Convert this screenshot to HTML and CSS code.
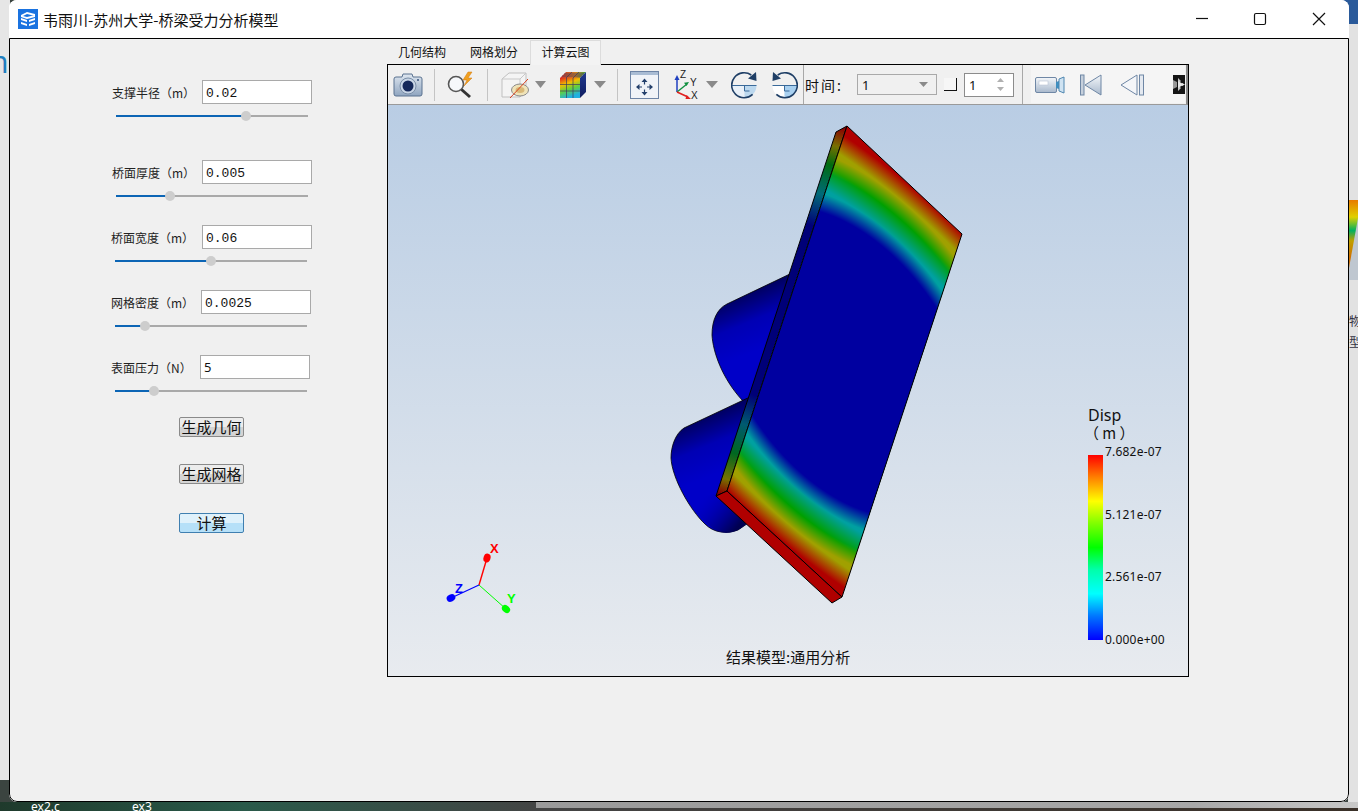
FILE: index.html
```html
<!DOCTYPE html>
<html lang="zh">
<head>
<meta charset="utf-8">
<title>桥梁受力分析模型</title>
<link rel="stylesheet" href="styles.css">
</head>
<body>
<div class="desktop">
  <div class="bg-left"><span class="bg-left-glyph">n</span></div>
  <div class="bg-top-right"></div>
  <div class="bg-right">
    <svg class="bg-right-plot" width="9" height="80" viewBox="0 0 9 80"><defs><linearGradient id="bgp" x1="0" y1="0" x2="0" y2="1"><stop offset="0" stop-color="#e87a00"/><stop offset=".25" stop-color="#e0d000"/><stop offset=".45" stop-color="#00b060"/><stop offset=".6" stop-color="#c0a000"/><stop offset=".85" stop-color="#d07000"/></linearGradient></defs><rect width="9" height="80" fill="#bfc7d0"/><path d="M0 0H9V18L0 68Z" fill="url(#bgp)"/></svg>
    <span class="bg-right-text">物<br>型</span>
  </div>
  <div class="bg-bottom"><span class="bg-file f1">ex2.c</span><span class="bg-file f2">ex3</span><span class="bg-bar"></span></div>

  <div class="window">
    <header class="titlebar">
      <svg class="app-icon" width="20" height="20" viewBox="0 0 20 20"><rect width="20" height="20" fill="#1a73e0"/><path d="M3 6l6-3 8 2v2l-8-2-4 2 4 1 8-2v2l-8 2-6-2zM3 9l6 2v2L3 11zM3 13l6 2v2l-6-2zM11 11l6-2v2l-6 2zM11 15l6-2v2l-6 2z" fill="#fff"/></svg>
      <span class="title">韦雨川-苏州大学-桥梁受力分析模型</span>
      <div class="win-controls">
        <svg class="win-btn" width="46" height="38" viewBox="0 0 46 38"><path d="M16 18.500H28" stroke="#111" stroke-width="1.200"/></svg>
        <svg class="win-btn" width="46" height="38" viewBox="0 0 46 38"><rect x="16.500" y="13.500" width="11" height="11" rx="1.500" fill="none" stroke="#111" stroke-width="1.200"/></svg>
        <svg class="win-btn" width="46" height="38" viewBox="0 0 46 38"><path d="M17 13l12 12M29 13L17 25" stroke="#111" stroke-width="1.200"/></svg>
      </div>
    </header>

    <main class="content">
      <aside class="params">
        <div class="param p1">
          <div class="param-row"><label class="param-label">支撑半径（m）</label><div class="param-input mono">0.02</div></div>
          <div class="slider"><div class="slider-fill" style="width:67.7%"></div><div class="slider-rest"></div><div class="slider-thumb" style="left:67.7%"></div></div>
        </div>
        <div class="param p2">
          <div class="param-row"><label class="param-label">桥面厚度（m）</label><div class="param-input mono">0.005</div></div>
          <div class="slider"><div class="slider-fill" style="width:28%"></div><div class="slider-rest"></div><div class="slider-thumb" style="left:28%"></div></div>
        </div>
        <div class="param p3">
          <div class="param-row"><label class="param-label">桥面宽度（m）</label><div class="param-input mono">0.06</div></div>
          <div class="slider"><div class="slider-fill" style="width:50%"></div><div class="slider-rest"></div><div class="slider-thumb" style="left:50%"></div></div>
        </div>
        <div class="param p4">
          <div class="param-row"><label class="param-label">网格密度（m）</label><div class="param-input mono">0.0025</div></div>
          <div class="slider"><div class="slider-fill" style="width:15.6%"></div><div class="slider-rest"></div><div class="slider-thumb" style="left:15.6%"></div></div>
        </div>
        <div class="param p5">
          <div class="param-row"><label class="param-label">表面压力（N）</label><div class="param-input">5</div></div>
          <div class="slider"><div class="slider-fill" style="width:20.300%"></div><div class="slider-rest"></div><div class="slider-thumb" style="left:20.300%"></div></div>
        </div>
        <button class="action b1">生成几何</button>
        <button class="action b2">生成网格</button>
        <button class="action primary b3">计算</button>
      </aside>

      <section class="workspace">
        <nav class="tabs">
          <span class="tab">几何结构</span>
          <span class="tab">网格划分</span>
          <span class="tab active">计算云图</span>
        </nav>
        <div class="viewer">
          <div class="toolbar">
            <svg class="tb i-camera" width="30" height="26" viewBox="0 0 30 26"><defs><linearGradient id="camg" x1="0" y1="0" x2="0" y2="1"><stop offset="0" stop-color="#dfe7f0"/><stop offset="1" stop-color="#8fa5c0"/></linearGradient></defs><path d="M3 5h6l1-3h9l1 3h7a2 2 0 0 1 2 2v15a2 2 0 0 1-2 2H3a2 2 0 0 1-2-2V7a2 2 0 0 1 2-2z" fill="url(#camg)" stroke="#5a7290"/><circle cx="15" cy="14" r="8" fill="#c9d6e6" stroke="#7b8fa8"/><circle cx="15" cy="14" r="5.500" fill="#14285a"/><circle cx="25" cy="8" r="1" fill="#35507a"/></svg>
            <span class="tb-sep s1"></span>
            <svg class="tb i-mag" width="30" height="28" viewBox="0 0 30 28"><circle cx="10" cy="13" r="7.500" fill="#f6f8fb" stroke="#555" stroke-width="1.600"/><path d="M15.500 18.500L24 26" stroke="#333" stroke-width="3"/><path d="M22 1l-5 8h4l-3 6 8-8h-4l4-6z" fill="#f0a020" stroke="#d07810" stroke-width=".5"/></svg>
            <span class="tb-sep s2"></span>
            <svg class="tb i-cube" width="30" height="28" viewBox="0 0 30 28"><path d="M2 8l7-6h17v17l-6 7H2z" fill="#f4f4f4" stroke="#c0c0c0"/><path d="M2 8h18v18M20 8l6-6" fill="none" stroke="#c8c8c8"/><ellipse cx="20" cy="19" rx="8.500" ry="6" fill="#efe3b8" stroke="#8a8a8a"/><ellipse cx="20" cy="19" rx="4.500" ry="3" fill="#d8b878"/><path d="M10 27L28 8" stroke="#d84020" stroke-width="1"/></svg>
            <svg class="tb i-drop d1" width="11" height="7" viewBox="0 0 11 7"><path d="M0 0h11L5.500 7z" fill="#8a8a8a"/></svg>
            <svg class="tb i-colorcube" width="28" height="28" viewBox="0 0 28 28"><defs><linearGradient id="ccg" x1="0" y1="0" x2=".35" y2="1"><stop offset="0" stop-color="#e02020"/><stop offset=".35" stop-color="#f0c000"/><stop offset=".65" stop-color="#60d040"/><stop offset="1" stop-color="#20b0e0"/></linearGradient><linearGradient id="cct" x1="0" y1="0" x2="1" y2="0"><stop offset="0" stop-color="#d03030"/><stop offset=".6" stop-color="#d08020"/><stop offset="1" stop-color="#40a040"/></linearGradient><linearGradient id="ccs" x1="0" y1="0" x2="0" y2="1"><stop offset="0" stop-color="#203a90"/><stop offset="1" stop-color="#101d60"/></linearGradient></defs><path d="M1 7l6-6h20L21 7z" fill="url(#cct)"/><path d="M21 7l6-6v20l-6 6z" fill="url(#ccs)"/><rect x="1" y="7" width="20" height="20" fill="url(#ccg)"/><path d="M7.500 7v20M14 7v20M1 13.500h20M1 20h20M7 7l6-6M14 7l6-6M5 3h20M3 5h20" stroke="#3b3b60" stroke-width=".7" fill="none"/></svg>
            <svg class="tb i-drop d2" width="12" height="7" viewBox="0 0 12 7"><path d="M0 0h12L6 7z" fill="#8a8a8a"/></svg>
            <span class="tb-sep s3"></span>
            <svg class="tb i-move" width="29" height="28" viewBox="0 0 29 28"><rect x=".5" y=".5" width="28" height="27" fill="#f0f3f8" stroke="#6d84a6"/><rect x="1" y="1" width="27" height="3" fill="#a9bcd4"/><path d="M14.500 7.500l3 3.500h-2.400v2.500h-1.200V11h-2.400zM14.500 24.500l3-3.500h-2.400v-2.500h-1.200V21h-2.400zM6 16l3.500-3v2.400H12v1.200H9.500V19zM23 16l-3.500-3v2.400H17v1.200h2.500V19z" fill="#24406c"/></svg>
            <svg class="tb i-axes" width="28" height="32" viewBox="0 0 28 32"><path d="M3 23V10" stroke="#2040c0" stroke-width="1.500"/><path d="M3 6L0.500 11h5z" fill="#2040c0"/><path d="M3 23l10-8" stroke="#109040" stroke-width="1.500"/><path d="M15 13l-5 .8 2.500 3.200z" fill="#109040"/><path d="M3 23l11 5" stroke="#e02020" stroke-width="1.500"/><path d="M17 30l-4.500-4-1 4z" fill="#e02020"/><text class="axis-txt" x="6" y="9">Z</text><text class="axis-txt" x="16" y="17">Y</text><text class="axis-txt" x="17" y="30">X</text></svg>
            <svg class="tb i-drop d3" width="12" height="7" viewBox="0 0 12 7"><path d="M0 0h12L6 7z" fill="#8a8a8a"/></svg>
            <svg class="tb i-rot r1" width="27" height="28" viewBox="0 0 27 28"><path d="M13.500 14.500V27a12.500 12.500 0 0 1-12.500-12.500z" fill="#e8f0f8"/><path d="M13.500 14.500V27a12.500 12.500 0 0 0 12-12.500z" fill="#bcd8ee"/><path d="M1 14.500h24.500M13.500 14.500V20h5" fill="none" stroke="#3a6a9a" stroke-width="1"/><path d="M21 24A12.500 12.500 0 1 1 21 4.500" fill="none" stroke="#1f3f66" stroke-width="1.600" transform="rotate(-4 13.500 14.500)"/><path d="M25 1l.5 9-8.500-2.500z" fill="#1f3f66"/></svg>
            <svg class="tb i-rot r2" width="27" height="28" viewBox="0 0 27 28"><path d="M13.500 14.500V27a12.500 12.500 0 0 1-12-12.500z" fill="#fff"/><path d="M13.500 14.500V27a12.500 12.500 0 0 0 12.500-12.500z" fill="#a8d0f0"/><path d="M1.500 14.500H26M13.500 14.500V20h5" fill="none" stroke="#3a6a9a" stroke-width="1"/><path d="M6 24A12.500 12.500 0 1 0 6 4.500" fill="none" stroke="#1f3f66" stroke-width="1.600" transform="rotate(4 13.500 14.500)"/><path d="M2 1l-.5 9 8.500-2.500z" fill="#1f3f66"/></svg>
            <span class="tb-sep s4"></span>
            <span class="time-label">时间:</span>
            <div class="combo"><span>1</span><svg width="9" height="5" viewBox="0 0 9 5"><path d="M0 0h9L4.500 5z" fill="#8a8a8a"/></svg></div>
            <span class="check"></span>
            <div class="spin"><span>1</span><svg width="7" height="15" viewBox="0 0 7 15"><path d="M3.500 1L7 5H0zM3.500 14L0 10h7z" fill="#b0b0b0"/></svg></div>
            <span class="tb-sep s5"></span>
            <div class="player">
              <svg class="i-video" width="30" height="18" viewBox="0 0 30 18"><defs><linearGradient id="vg" x1="0" y1="0" x2="0" y2="1"><stop offset="0" stop-color="#f4f7fa"/><stop offset="1" stop-color="#a8b8cc"/></linearGradient></defs><rect x=".5" y="1.500" width="21" height="15" rx="1.500" fill="url(#vg)" stroke="#6f87a5"/><rect x="4" y="5" width="9" height="4" fill="#fff" stroke="#b8c4d4" stroke-width=".6"/><path d="M21 6l3-1v8l-3-1z" fill="#3f8fc0"/><path d="M24 3l5-2v16l-5-2z" fill="#cfe3f2" stroke="#4f86b0"/></svg>
              <svg class="i-first" width="22" height="22" viewBox="0 0 22 22"><rect x=".5" y="1" width="3.500" height="20" fill="#c6d0dc" stroke="#6f87a5"/><path d="M21 1v20L5 11z" fill="url(#vg)" stroke="#6f87a5"/></svg>
              <svg class="i-prev" width="25" height="22" viewBox="0 0 25 22"><path d="M17 1v20L1 11z" fill="#f4f6f9" stroke="#6f87a5"/><rect x="19.500" y="1" width="4" height="20" fill="#e4e9f0" stroke="#6f87a5"/></svg>
              <svg class="i-clip" width="12" height="19" viewBox="0 0 12 19"><rect width="12" height="19" fill="#151515"/><path d="M0 5l4 2v5l-4 2z" fill="#999"/><path d="M5 3l3 3-3 3zM5 10l3 3-3 3z" fill="#c8c8c8"/><path d="M9 8l3 1.500L9 11z" fill="#eee"/><path d="M5 6l6 3.500-6 3.500z" fill="#e8e8e8"/></svg>
            </div>
          </div>
          <div class="canvas">
            <svg class="scene" width="800" height="571" viewBox="388 105 800 571">
              <defs>
                <linearGradient id="coneA" gradientUnits="userSpaceOnUse" x1="745" y1="285" x2="770" y2="345"><stop offset="0" stop-color="#000048"/><stop offset=".55" stop-color="#0000b4"/><stop offset="1" stop-color="#0000c8"/></linearGradient>
                <linearGradient id="coneB" gradientUnits="userSpaceOnUse" x1="700" y1="410" x2="725" y2="470"><stop offset="0" stop-color="#000048"/><stop offset=".55" stop-color="#0000b4"/><stop offset="1" stop-color="#0000c8"/></linearGradient>
                <linearGradient id="coneBLow" gradientUnits="userSpaceOnUse" x1="700" y1="500" x2="735" y2="530"><stop offset="0" stop-color="#0000b8" stop-opacity="0"/><stop offset="1" stop-color="#000050"/></linearGradient>
                <linearGradient id="edge" gradientUnits="userSpaceOnUse" x1="842" y1="128" x2="722" y2="494">
                  <stop offset="0" stop-color="#8a0000"/><stop offset=".05" stop-color="#787000"/><stop offset=".10" stop-color="#006c10"/><stop offset=".18" stop-color="#006a78"/><stop offset=".265" stop-color="#000078"/>
                  <stop offset=".73" stop-color="#000078"/><stop offset=".81" stop-color="#005a70"/><stop offset=".89" stop-color="#006820"/><stop offset=".96" stop-color="#787000"/><stop offset="1" stop-color="#8a0000"/>
                </linearGradient>
                <clipPath id="faceClip"><path d="M847 126L962 234 842 597 727 491Z"/></clipPath>
                <radialGradient id="cY"><stop offset=".905" stop-color="#a0a000"/><stop offset="1" stop-color="#a0a000" stop-opacity="0"/></radialGradient>
                <radialGradient id="cG"><stop offset=".907" stop-color="#00a000"/><stop offset="1" stop-color="#00a000" stop-opacity="0"/></radialGradient>
                <radialGradient id="cT"><stop offset=".87" stop-color="#00a0a0"/><stop offset="1" stop-color="#00a0a0" stop-opacity="0"/></radialGradient>
                <radialGradient id="cB"><stop offset=".88" stop-color="#0000a0"/><stop offset="1" stop-color="#0000a0" stop-opacity="0"/></radialGradient>
              </defs>
              <path d="M792 273L727 304C717 309 712 320 712 335C713 352 722 378 742 400L800 420Z" fill="url(#coneA)" stroke="#000" stroke-width=".8"/>
              <path d="M752 396L684 428C675 434 671 447 671 458C672 478 690 510 705 524C714 533 726 534 738 530L760 515Z" fill="url(#coneB)" stroke="#000" stroke-width=".8"/>
              <path d="M690 500C700 520 714 533 726 533C736 533 742 528 750 520L730 490Z" fill="url(#coneBLow)"/>
              <path d="M847 126L836 132 716 496 727 491Z" fill="url(#edge)" stroke="#000" stroke-width="1"/>
              <path d="M727 491L842 597 832 603 716 496Z" fill="#b00000" stroke="#000" stroke-width="1"/>
              <g clip-path="url(#faceClip)">
                <rect x="700" y="110" width="280" height="510" fill="#b00000"/>
                <g transform="matrix(57.500 53.500 60 -182 844.600 362)">
                  <g transform="matrix(1 .025 0 1 0 0)">
                    <ellipse cx="0" cy="0" rx="5" ry=".995" fill="url(#cY)"/>
                    <ellipse cx="0" cy="0" rx="3" ry=".90" fill="url(#cG)"/>
                    <ellipse cx="0" cy="0" rx="3.700" ry=".816" fill="url(#cT)"/>
                    <ellipse cx="0" cy="0" rx="2.400" ry=".72" fill="url(#cB)"/>
                  </g>
                </g>
              </g>
              <path d="M847 126L962 234 842 597 727 491Z" fill="none" stroke="#000" stroke-width="1"/>
              <g class="triad">
                <path d="M479 585L487 558" stroke="#f00" stroke-width="1.400"/><ellipse cx="487" cy="558" rx="3.500" ry="4.500" transform="rotate(17 487 558)" fill="#f00"/>
                <path d="M479 585L506 609" stroke="#0f0" stroke-width="1"/><ellipse cx="506" cy="609" rx="3.500" ry="4.500" transform="rotate(-48 506 609)" fill="#0f0"/>
                <path d="M479 585L451 598" stroke="#00f" stroke-width="1.200"/><ellipse cx="451" cy="598" rx="4.500" ry="3.500" transform="rotate(-25 451 598)" fill="#00f"/>
                <text class="t-x" x="490" y="553">X</text><text class="t-y" x="507" y="603">Y</text><text class="t-z" x="455" y="593">Z</text>
              </g>
            </svg>
            <div class="legend">
              <div class="legend-title">Disp</div>
              <div class="legend-unit">（ m ）</div>
              <div class="legend-scale">
                <div class="legend-bar"></div>
                <div class="legend-ticks"><span>7.682e-07</span><span>5.121e-07</span><span>2.561e-07</span><span>0.000e+00</span></div>
              </div>
            </div>
            <div class="caption">结果模型:通用分析</div>
          </div>
        </div>
      </section>
    </main>
  </div>
</div>
</body>
</html>
```

FILE: styles.css
```css
* { box-sizing: border-box; }
html, body { margin: 0; padding: 0; }
body { width: 1358px; height: 811px; overflow: hidden; font-family: "Noto Sans", "Noto Sans CJK SC", sans-serif; color: #111; }

.desktop { position: relative; width: 1358px; height: 811px; background: #3b4440; overflow: hidden; }
.bg-left { position: absolute; left: 0; top: 0; width: 10px; height: 780px; background: #e6e6e6; overflow: hidden; }
.bg-left-glyph { position: absolute; left: -10px; top: 41px; font: 30px "Noto Sans", sans-serif; color: #1f7fbf; }
.bg-top-right { position: absolute; right: 0; top: 0; width: 30px; height: 24px; background: #2a5a9a; }
.bg-right { position: absolute; right: 0; top: 24px; width: 10px; height: 787px; background: #e2e2e2; overflow: hidden; }
.bg-right-plot { position: absolute; left: 1px; top: 176px; display: block; }
.bg-right-text { position: absolute; left: 1px; top: 286px; font: 12px/21px "Noto Sans CJK SC", sans-serif; color: #334; }
.bg-bottom { position: absolute; left: 0; bottom: 0; width: 1358px; height: 9px; background: linear-gradient(90deg, #1f3a2c, #2a5a4a 18%, #444 40%, #3a3028 100%); overflow: hidden; }
.bg-file { position: absolute; top: -4px; font: 12px "Noto Sans", sans-serif; color: #fff; }
.f1 { left: 31px; }
.f2 { left: 132px; }
.bg-bar { position: absolute; left: 536px; top: 0; right: 0; height: 6px; background: linear-gradient(90deg, #9a9a9a, #a8a8a8 80%, #c8c8c8); }

.window { position: absolute; left: 9px; top: 0; width: 1340px; height: 802px; display: flex; flex-direction: column; border-radius: 8px; overflow: hidden; background: #fff; }
.titlebar { height: 38px; flex: none; display: flex; align-items: center; padding-left: 9px; background: #fff; }
.app-icon { flex: none; display: block; }
.title { margin-left: 5px; font: 15px "Noto Sans CJK SC", sans-serif; color: #111; }
.win-controls { margin-left: auto; display: flex; padding-right: 7px; gap: 12px; }
.win-btn { display: block; }

.content { flex: 1; display: flex; border: 1px solid #000; border-radius: 0 0 8px 8px; background: #f0f0f0; min-height: 0; }
.params { width: 377px; flex: none; display: flex; flex-direction: column; align-items: flex-start; padding-top: 41px; }

.param { display: flex; flex-direction: column; align-items: flex-start; margin-left: 101px; }
.param-row { display: flex; align-items: center; height: 24px; }
.param-label { font: 12px "Noto Sans CJK SC", sans-serif; color: #222; white-space: nowrap; }
.param-input { width: 110px; height: 24px; border: 1px solid #a9a9a9; background: #fff; padding-left: 3px; font: 13px/22px "Noto Sans", sans-serif; color: #111; }
.param-input.mono { font-family: "Liberation Mono", monospace; padding-top: 2px; }
.p1, .p2 { margin-left: 102px; }
.p1 .param-label, .p2 .param-label { width: 90px; }
.p3 .param-label { width: 91px; }
.p4 .param-label { width: 90px; }
.p5 .param-label { width: 89px; }
.p2 { margin-top: 39px; }
.p3, .p4, .p5 { margin-top: 24px; }

.slider { position: relative; display: flex; align-items: center; width: 192px; height: 10px; margin-top: 7px; margin-left: 4px; }
.slider-fill { height: 2px; background: #0c65b5; }
.slider-rest { flex: 1; height: 2px; background: #a9a9a9; }
.slider-thumb { position: absolute; top: 0; width: 10px; height: 10px; margin-left: -5px; border-radius: 50%; background: #cdcdcd; }

.action { width: 65px; height: 20px; padding: 0; margin-left: 169px; border: 1px solid #8a8a8a; border-radius: 2px; background: linear-gradient(#ececec 50%, #d4d4d4 50%); font: 15px/16px "Noto Sans CJK SC", sans-serif; color: #111; }
.b1 { margin-top: 21px; }
.b2 { margin-top: 27px; }
.b3 { margin-top: 29px; }
.primary { border-color: #3f7fb0; background: linear-gradient(#dff1fb 50%, #b6e0f8 50%); }

.workspace { flex: none; width: 802px; display: flex; flex-direction: column; padding-top: 1px; }
.tabs { display: flex; height: 24px; margin-left: -1px; flex: none; }
.tab { width: 72px; text-align: center; font: 12px/24px "Noto Sans CJK SC", sans-serif; color: #111; }
.tab.active { width: 71px; height: 25px; background: #f3f3f3; border: 1px solid #dcdcdc; border-bottom: 0; line-height: 22px; position: relative; z-index: 1; }

.viewer { width: 802px; height: 613px; border: 1px solid #000; display: flex; flex-direction: column; background: #f0f0f0; flex: none; }
.toolbar { height: 40px; flex: none; display: flex; align-items: center; border-bottom: 1px solid #9a9a9a; border-right: 2px solid #8a8a8a; background: #f0f0f0; }
.tb { flex: none; display: block; }
.tb-sep { flex: none; width: 1px; height: 32px; background: #c4c4c4; }
.tb-sep.s4, .tb-sep.s5 { height: 39px; background: #a8a8a8; }
.i-camera { margin-left: 5px; }
.s1 { margin-left: 11px; }
.i-mag { margin-left: 11px; }
.s2 { margin-left: 11px; }
.i-cube { margin-left: 12px; }
.d1 { margin-left: 5px; }
.i-colorcube { margin-left: 13px; }
.d2 { margin-left: 7px; }
.s3 { margin-left: 11px; }
.i-move { margin-left: 12px; }
.i-axes { margin-left: 15px; }
.d3 { margin-left: 4px; }
.r1 { margin-left: 13px; }
.r2 { margin-left: 13px; }
.s4 { margin-left: 5px; }
.axis-txt { font: 10px "Liberation Sans", sans-serif; fill: #222; }
.time-label { margin-left: 1px; width: 38px; flex: none; font: 14px "Noto Sans CJK SC", sans-serif; color: #111; letter-spacing: 2px; white-space: nowrap; }
.combo { margin-left: 14px; width: 80px; height: 21px; flex: none; display: flex; align-items: center; justify-content: space-between; border: 1px solid #a9a9a9; padding: 0 8px 0 4px; font: 13px "Noto Sans", sans-serif; color: #111; }
.check { margin-left: 7px; width: 13px; height: 13px; flex: none; border-right: 1px solid #111; border-bottom: 1px solid #111; background: #f6f6f6; }
.spin { margin-left: 7px; width: 50px; height: 24px; flex: none; display: flex; align-items: center; justify-content: space-between; border: 1px solid #8c8c8c; background: #fff; padding: 0 9px 0 4px; font: 13px "Noto Sans", sans-serif; color: #111; }
.s5 { margin-left: 8px; }
.player { margin-left: 8px; width: 154px; height: 37px; flex: none; display: flex; align-items: center; background: #f5f5f5; padding-left: 4px; }
.player svg { flex: none; display: block; }
.i-first { margin-left: 15px; }
.i-prev { margin-left: 18px; }
.i-clip { margin-left: 28px; }

.canvas { position: relative; flex: 1; background: linear-gradient(#b9cde4, #e8ebef); overflow: hidden; }
.scene { display: block; }
.triad text { font: bold 13px "Liberation Sans", sans-serif; }
.t-x { fill: #f00; }
.t-y { fill: #0f0; }
.t-z { fill: #00f; }

.legend { position: absolute; left: 700px; top: 301px; width: 90px; }
.legend-title { font: 16px/18px "Noto Sans", sans-serif; color: #111; }
.legend-unit { font: 15px/16px "Noto Sans CJK SC", sans-serif; color: #111; margin-top: 1px; margin-left: -4px; white-space: nowrap; }
.legend-scale { display: flex; margin-top: 14px; height: 185px; }
.legend-bar { width: 15px; height: 185px; background: linear-gradient(#f00, #ff7f00 12%, #ff0 25%, #7fff00 37%, #0f0 50%, #0fa 62%, #0ff 75%, #07f 87%, #00f 100%); }
.legend-ticks { position: relative; display: flex; flex-direction: column; justify-content: space-between; height: 204px; margin-top: -11px; margin-left: 2px; font: 12px/16px "Noto Sans", sans-serif; color: #111; white-space: nowrap; letter-spacing: 0.2px; }
.caption { position: absolute; left: 338px; top: 543px; font: 15px/18px "Noto Sans CJK SC", sans-serif; color: #111; white-space: nowrap; }
```
